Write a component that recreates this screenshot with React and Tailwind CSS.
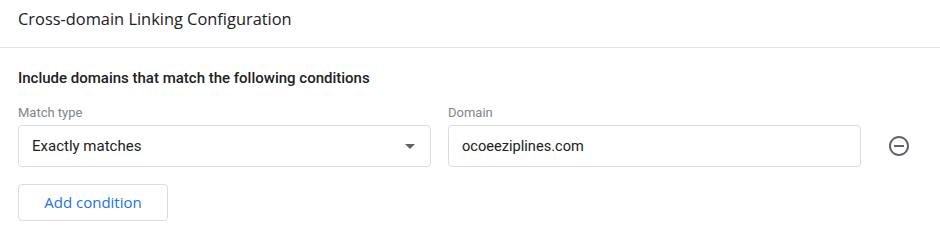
import { useState } from 'react';

function MinusCircle() {
  return (
    <svg viewBox="0 0 24 24" className="w-6 h-6" fill="#5f6368">
      <path d="M7 11v2h10v-2H7zm5-9C6.48 2 2 6.48 2 12s4.48 10 10 10 10-4.48 10-10S17.52 2 12 2zm0 18c-4.41 0-8-3.59-8-8s3.59-8 8-8 8 3.59 8 8-3.59 8-8 8z" />
    </svg>
  );
}

function App() {
  const [domain, setDomain] = useState('ocoeeziplines.com');

  return (
    <div className="w-[940px] h-[240px] bg-white overflow-hidden font-['Roboto',sans-serif]">
      <div className="h-[48px] border-b border-[#e6e6e6] px-[18px] pt-[8px]">
        <h1 className="font-['Open_Sans',sans-serif] text-[16.4px] leading-[22px] text-[#202124]">
          Cross-domain Linking Configuration
        </h1>
      </div>

      <div className="px-[18px] pt-[20px]">
        <h2 className="text-[15px] leading-[20px] font-medium text-[#202124]">
          Include domains that match the following conditions
        </h2>

        <div className="flex items-end mt-[17px]">
          <div className="w-[413px]">
            <label className="block text-[13px] leading-[16px] text-[#80868b] mb-[4px]">Match type</label>
            <div className="h-[42px] border border-[#dadce0] rounded-[4px] flex items-center justify-between pl-[13px] pr-[15px]">
              <span className="text-[15px] text-[#202124]">Exactly matches</span>
              <svg viewBox="0 0 10 5" className="w-[10px] h-[5px]" fill="#5f6368">
                <path d="M0 0l5 5 5-5z" />
              </svg>
            </div>
          </div>

          <div className="w-[413px] ml-[17px]">
            <label className="block text-[13px] leading-[16px] text-[#80868b] mb-[4px]">Domain</label>
            <input
              value={domain}
              onChange={(e) => setDomain(e.target.value)}
              className="w-full h-[42px] border border-[#dadce0] rounded-[4px] px-[13px] text-[14.6px] text-[#202124] outline-none"
            />
          </div>

          <div className="h-[42px] flex items-center ml-[26px]">
            <MinusCircle />
          </div>
        </div>

        <button className="mt-[17px] w-[150px] h-[37px] border border-[#dadce0] rounded-[4px] text-[15px] font-medium text-[#1a73e8] font-['Open_Sans',sans-serif]">
          Add condition
        </button>
      </div>
    </div>
  );
}

export default App;
